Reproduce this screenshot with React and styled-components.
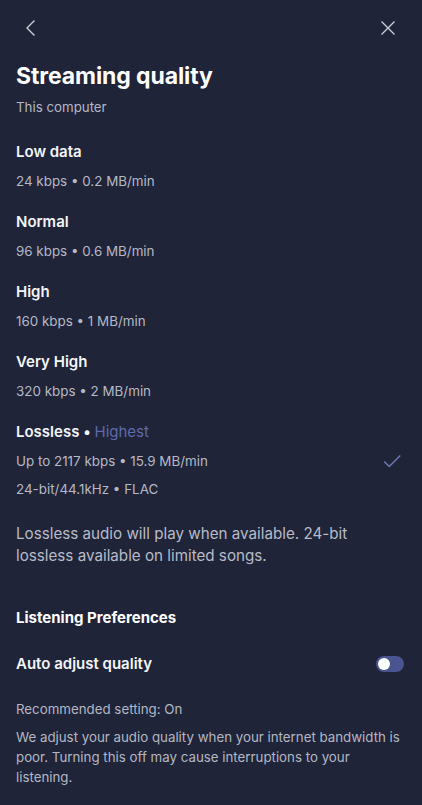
import React from "react";
import styled, { createGlobalStyle } from "styled-components";

const GlobalStyle = createGlobalStyle`
  html, body {
    margin: 0;
    padding: 0;
    background-color: #1f2439;
  }
  * {
    box-sizing: border-box;
  }
`;

const options = [
  { name: "Low data", details: ["24 kbps • 0.2 MB/min"] },
  { name: "Normal", details: ["96 kbps • 0.6 MB/min"] },
  { name: "High", details: ["160 kbps • 1 MB/min"] },
  { name: "Very High", details: ["320 kbps • 2 MB/min"] },
  {
    name: "Lossless",
    tag: "Highest",
    details: ["Up to 2117 kbps • 15.9 MB/min", "24-bit/44.1kHz • FLAC"],
    selected: true,
  },
];

const App = () => {
  return (
    <>
      <GlobalStyle />
      <Panel>
        <TopBar>
          <IconButton aria-label="Back">
            <svg width="24" height="24" viewBox="0 0 24 24" fill="none">
              <path d="M15.5 4.5L8 12l7.5 7.5" stroke="#c9ccd6" strokeWidth="1.4" />
            </svg>
          </IconButton>
          <IconButton aria-label="Close">
            <svg width="24" height="24" viewBox="0 0 24 24" fill="none">
              <path d="M5.5 5.5l13 13M18.5 5.5l-13 13" stroke="#c9ccd6" strokeWidth="1.4" />
            </svg>
          </IconButton>
        </TopBar>

        <Content>
          <Title>Streaming quality</Title>
          <Subtitle>This computer</Subtitle>

          <OptionList>
            {options.map((opt) => (
              <Option key={opt.name}>
                <OptionName>
                  {opt.name}
                  {opt.tag && (
                    <>
                      {" • "}
                      <Tag>{opt.tag}</Tag>
                    </>
                  )}
                </OptionName>
                {opt.details.map((d, i) => (
                  <DetailRow key={d}>
                    <Detail>{d}</Detail>
                    {opt.selected && i === 0 && (
                      <Check width="22" height="22" viewBox="0 0 24 24" fill="none">
                        <path d="M3.5 12.5l5.5 5.5L21 6" stroke="#6e7ab0" strokeWidth="1.6" />
                      </Check>
                    )}
                  </DetailRow>
                ))}
              </Option>
            ))}
          </OptionList>

          <Note>
            Lossless audio will play when available. 24-bit lossless available on
            limited songs.
          </Note>

          <SectionTitle>Listening Preferences</SectionTitle>

          <ToggleRow>
            <OptionName>Auto adjust quality</OptionName>
            <Toggle $on={false} />
          </ToggleRow>

          <SmallText>Recommended setting: On</SmallText>
          <SmallParagraph>
            We adjust your audio quality when your internet bandwidth is poor.
            Turning this off may cause interruptions to your listening.
          </SmallParagraph>
        </Content>
      </Panel>
    </>
  );
};

const Panel = styled.div`
  min-height: 100vh;
  width: 100%;
  background-color: #1f2439;
  font-family: "Inter", "Liberation Sans", sans-serif;
  color: #ffffff;
`;

const TopBar = styled.div`
  height: 56px;
  display: flex;
  align-items: center;
  justify-content: space-between;
  padding: 0 22px 0 19px;
`;

const IconButton = styled.button`
  width: 24px;
  height: 24px;
  padding: 0;
  border: none;
  background: transparent;
  display: flex;
  align-items: center;
  justify-content: center;
  cursor: pointer;
`;

const Content = styled.div`
  padding: 5px 18px 0 16px;
`;

const Title = styled.h1`
  margin: 0;
  font-size: 23px;
  line-height: 30px;
  font-weight: 700;
  letter-spacing: -0.1px;
`;

const Subtitle = styled.div`
  margin-top: 6px;
  font-size: 13.3px;
  line-height: 20px;
  color: #b4b7c3;
`;

const OptionList = styled.div`
  margin-top: 24px;
  display: flex;
  flex-direction: column;
  gap: 20px;
`;

const Option = styled.div`
  display: flex;
  flex-direction: column;
  gap: 8px;
`;

const OptionName = styled.div`
  font-size: 15px;
  line-height: 22px;
  font-weight: 600;
  color: #f4f5f8;
`;

const Tag = styled.span`
  font-weight: 400;
  color: #5e6aa9;
`;

const DetailRow = styled.div`
  display: flex;
  align-items: center;
  justify-content: space-between;
  height: 20px;
`;

const Detail = styled.div`
  font-size: 13.4px;
  line-height: 20px;
  color: #b6b9c5;
`;

const Check = styled.svg`
  margin-right: 1px;
`;

const Note = styled.p`
  margin: 24px 0 0;
  max-width: 360px;
  font-size: 15.2px;
  line-height: 22px;
  color: #b8bbc7;
`;

const SectionTitle = styled.h2`
  margin: 40px 0 0;
  font-size: 15px;
  line-height: 22px;
  font-weight: 700;
`;

const ToggleRow = styled.div`
  margin-top: 24px;
  display: flex;
  align-items: center;
  justify-content: space-between;
`;

const Toggle = styled.div`
  position: relative;
  width: 28px;
  height: 16px;
  border-radius: 8px;
  background-color: ${(p) => (p.$on ? "#1ed760" : "#4a5490")};

  &::after {
    content: "";
    position: absolute;
    top: 2px;
    left: ${(p) => (p.$on ? "14px" : "2px")};
    width: 12px;
    height: 12px;
    border-radius: 50%;
    background-color: #ffffff;
  }
`;

const SmallText = styled.div`
  margin-top: 24px;
  font-size: 13.3px;
  line-height: 20px;
  color: #b4b7c3;
`;

const SmallParagraph = styled.p`
  margin: 8px 0 0;
  font-size: 13.3px;
  line-height: 20px;
  color: #b4b7c3;
`;

export default App;
